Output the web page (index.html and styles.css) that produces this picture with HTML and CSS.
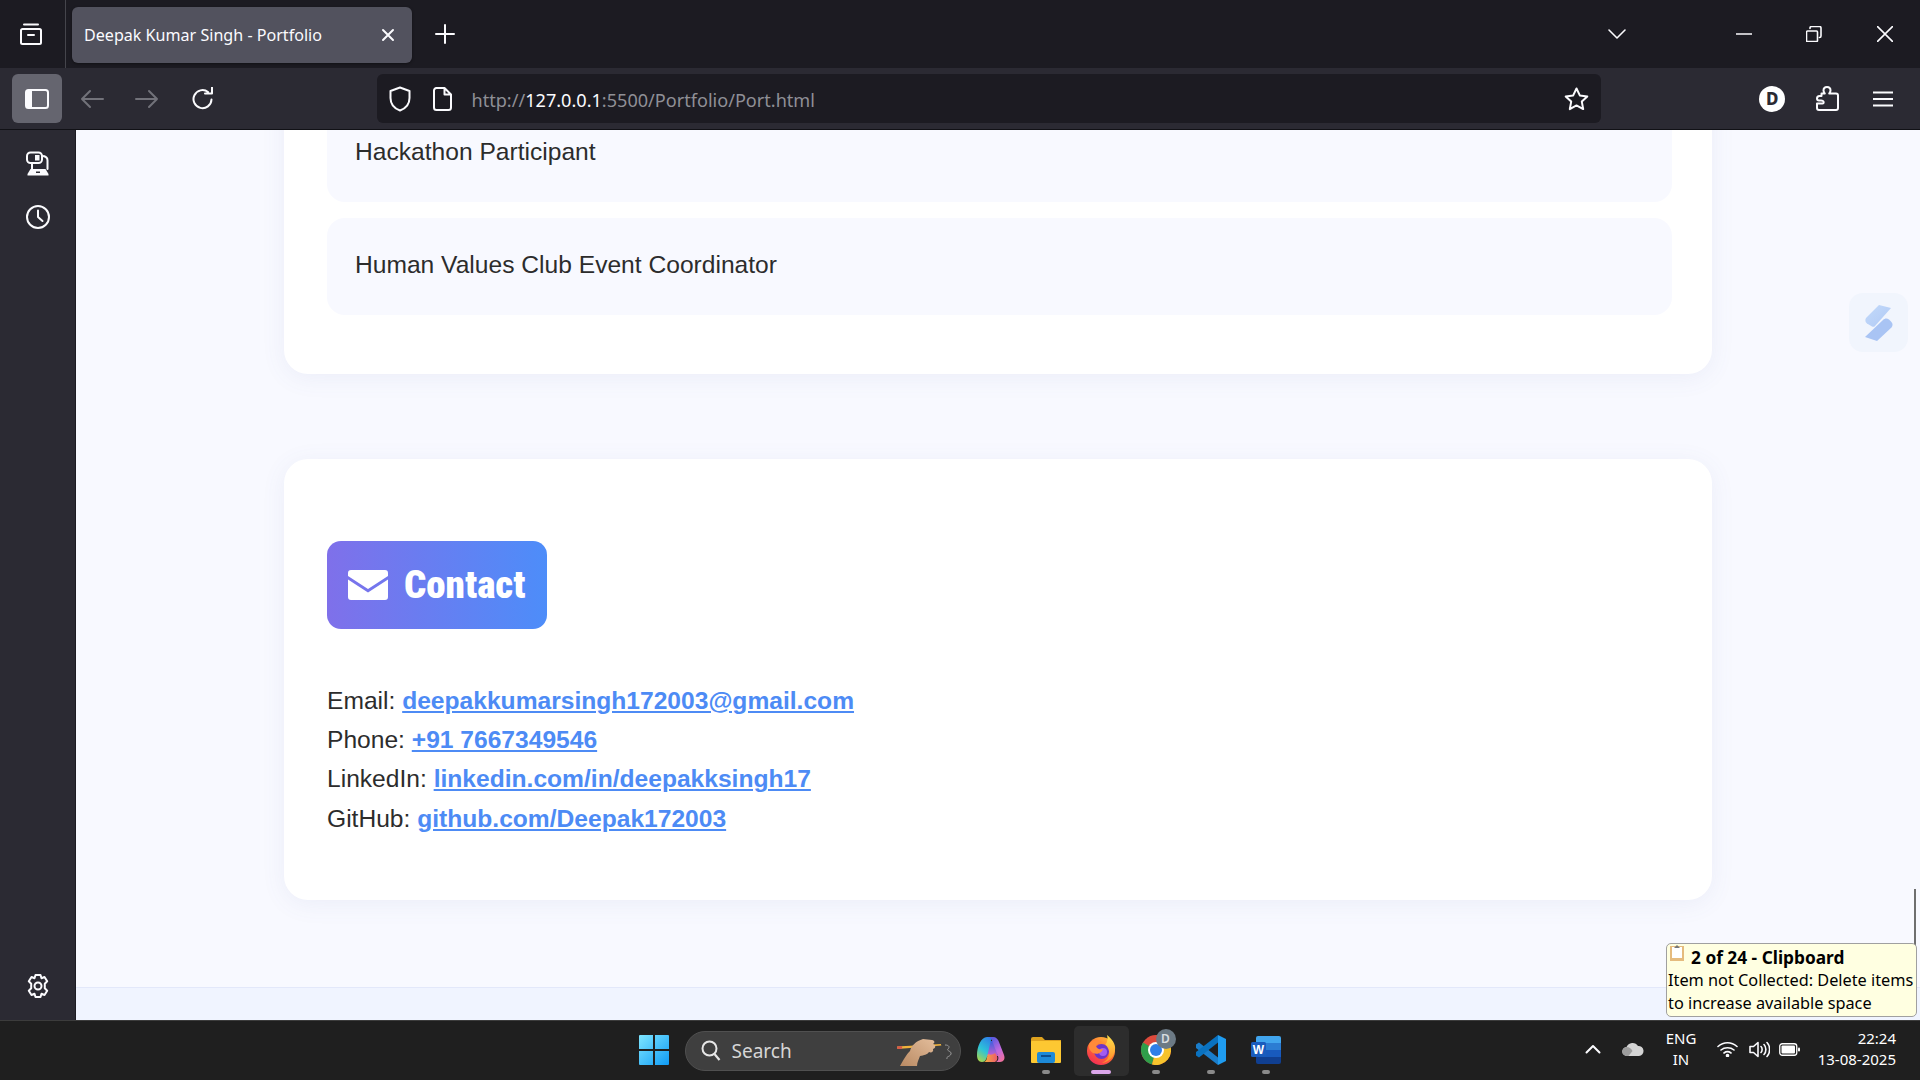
FILE: index.html
```html
<!DOCTYPE html>
<html lang="en">
<head>
    <meta charset="UTF-8">
    <meta name="viewport" content="width=device-width, initial-scale=1.0">
    <title>Deepak Kumar Singh - Portfolio</title>
    <link rel="stylesheet" href="styles.css">
</head>
<body>
<div class="screen">

    <!-- tab strip -->
    <div class="tabbar">
        <div class="tabs-btn">
            <svg class="ico" width="26" height="26" viewBox="0 0 26 26"><path d="M6 3.500h14M4.500 8h17a1.500 1.500 0 0 1 1.500 1.500v12a1.500 1.500 0 0 1-1.500 1.500h-17a1.500 1.500 0 0 1-1.500-1.500v-12a1.500 1.500 0 0 1 1.500-1.500zM10 14h6"/></svg>
        </div>
        <div class="tab">
            <span class="tab-title">Deepak Kumar Singh - Portfolio</span>
            <svg class="ico" width="14" height="14" viewBox="0 0 14 14"><path d="M2 2l10 10M12 2L2 12"/></svg>
        </div>
        <div class="new-tab">
            <svg class="ico" width="20" height="20" viewBox="0 0 20 20"><path d="M10 1v18M1 10h18"/></svg>
        </div>
        <div class="tab-list">
            <svg class="ico thin" width="20" height="12" viewBox="0 0 20 12"><path d="M2 2l8 8 8-8"/></svg>
        </div>
        <div class="win-btn">
            <svg class="ico thin" width="16" height="4" viewBox="0 0 16 4"><path d="M0 2h16"/></svg>
        </div>
        <div class="win-btn">
            <svg class="ico thin" width="16" height="16" viewBox="0 0 16 16"><path d="M1.500 5h9a1 1 0 0 1 1 1v8.500a1 1 0 0 1-1 1h-9a1 1 0 0 1-1-1V6a1 1 0 0 1 1-1zM4 2.500V2a1.500 1.500 0 0 1 1.500-1.500h8A1.500 1.500 0 0 1 15 2v8a1.500 1.500 0 0 1-1.500 1.500"/></svg>
        </div>
        <div class="win-btn">
            <svg class="ico thin" width="16" height="16" viewBox="0 0 16 16"><path d="M.5.5l15 15M15.500.5l-15 15"/></svg>
        </div>
    </div>

    <!-- nav toolbar -->
    <div class="toolbar">
        <div class="side-toggle">
            <svg width="24" height="20" viewBox="0 0 24 20"><rect x="1" y="1" width="22" height="18" rx="2.500" fill="none" stroke="#fbfbfe" stroke-width="2"/><rect x="1" y="1" width="6" height="18" fill="#fbfbfe"/></svg>
        </div>
        <div class="nav-btn dim">
            <svg class="ico" width="24" height="20" viewBox="0 0 24 20"><path d="M23 10H2M10 2l-8 8 8 8"/></svg>
        </div>
        <div class="nav-btn dim">
            <svg class="ico" width="24" height="20" viewBox="0 0 24 20"><path d="M1 10h21M14 2l8 8-8 8"/></svg>
        </div>
        <div class="nav-btn">
            <svg class="ico" width="24" height="24" viewBox="0 0 24 24"><path d="M20.500 12.500A9 9 0 1 1 17 5M14 6.500h7V0"/></svg>
        </div>
        <div class="urlbar">
            <svg class="ico shield" width="22" height="26" viewBox="0 0 22 26"><path d="M11 1.500l9.500 3.500v7c0 6-4 10.500-9.500 12.500C5.500 22.500 1.500 18 1.500 12V5z"/></svg>
            <svg class="ico page" width="19" height="24" viewBox="0 0 19 24"><path d="M3 1h8.500L18 7.500V20.500a2.500 2.500 0 0 1-2.500 2.500h-12A2.500 2.500 0 0 1 1 20.500v-17A2.500 2.500 0 0 1 3.500 1zM11.500 1v6.500H18"/></svg>
            <span class="url"><span class="url-dim">http://</span>127.0.0.1<span class="url-dim">:5500/Portfolio/Port.html</span></span>
            <svg class="ico star" width="25" height="24" viewBox="0 0 25 24"><path d="M12.500 1.500l3.300 6.900 7.500 1-5.500 5.200 1.400 7.500-6.700-3.700-6.700 3.700 1.400-7.500L1.700 9.400l7.500-1z"/></svg>
        </div>
        <div class="tool-icons">
            <div class="nav-btn"><span class="avatar">D</span></div>
            <div class="nav-btn">
                <svg class="ico" width="23" height="25" viewBox="0 0 23 25"><path d="M5.500 7.500h3.300c-.8-1-1.300-2-1.300-3C7.500 2.500 9 1 11 1s3.500 1.500 3.500 3.500c0 1-.5 2-1.300 3H20a2 2 0 0 1 2 2V22a2 2 0 0 1-2 2H3a2 2 0 0 1-2-2v-4.500h5.500c.8 0 1.200-.5 1.200-1.200 0-1-1-1.800-2.700-1.800H3a2 2 0 0 1-2-2c0-1.500 1.200-2.500 2.500-2.500h2V7.500z"/></svg>
            </div>
            <div class="nav-btn">
                <svg class="ico" width="20" height="16" viewBox="0 0 20 16"><path d="M0 1.500h20M0 8h20M0 14.500h20"/></svg>
            </div>
        </div>
    </div>

    <div class="middle">
        <!-- firefox sidebar -->
        <div class="sidebar">
            <svg class="ico side-ico" width="26" height="26" viewBox="0 0 26 26"><rect x="2" y="1.500" width="15" height="10.500" rx="3.500"/><rect x="10" y="4" width="4.500" height="5.500" fill="#fbfbfe" stroke="none"/><path d="M17 5c4 0 5.500 1.500 5.500 4.500V18M7 12v6"/><path d="M5.500 18h15l3 5v1.500h-21V23z" fill="#fbfbfe" stroke="none"/><rect x="11" y="20.500" width="4" height="1.500" fill="#2b2a33" stroke="none"/></svg>
            <svg class="ico side-ico" width="26" height="26" viewBox="0 0 26 26"><circle cx="13" cy="13" r="11"/><path d="M13 6.500V13l4.500 4"/></svg>
            <svg class="ico side-ico gear" width="26" height="26" viewBox="0 0 26 26"><path d="M10.500 2h5l1 3.200 3-1.200 2.700 4.300-2.400 2.400.0 4.600 2.400 2.400-2.700 4.300-3-1.200-1 3.200h-5l-1-3.200-3 1.200-2.700-4.300 2.400-2.400v-4.600L3.800 8.300 6.500 4l3 1.200z" stroke-linejoin="round"/><circle cx="13" cy="13" r="3.500"/></svg>
        </div>

        <!-- page, scrolled down to the end -->
        <div class="viewport">
            <div class="page-body">
                <section class="card card-extra">
                    <div class="item">Hackathon Participant</div>
                    <div class="item">Human Values Club Event Coordinator</div>
                </section>
                <section class="card">
                    <h2 class="badge">
                        <svg width="40" height="30" viewBox="0 0 40 30"><path d="M3 0h34a3 3 0 0 1 3 3v3L20 19 0 6V3a3 3 0 0 1 3-3zM0 9.500L20 22.500 40 9.500V27a3 3 0 0 1-3 3H3a3 3 0 0 1-3-3z" fill="#fff"/></svg>
                        <span>Contact</span>
                    </h2>
                    <p class="contact-line">Email: <a href="#">deepakkumarsingh172003@gmail.com</a></p>
                    <p class="contact-line">Phone: <a href="#">+91 7667349546</a></p>
                    <p class="contact-line">LinkedIn: <a href="#">linkedin.com/in/deepakksingh17</a></p>
                    <p class="contact-line">GitHub: <a href="#">github.com/Deepak172003</a></p>
                </section>
            </div>
            <div class="page-footer"></div>

            <div class="float-widget">
                <svg width="34" height="40" viewBox="0 0 34 40"><defs><linearGradient id="wgA" x1="0" y1="0" x2="1" y2="1"><stop offset="0" stop-color="#c3dafa"/><stop offset="1" stop-color="#b0c9f5"/></linearGradient></defs><path d="M17 2l12 3-16 18c-1 1-2 1-3 .5l-5-3c-2-1.500-2-4-1-5.500z" fill="url(#wgA)"/><path d="M21 17c2-2 4-2 6-.5l2 2c2 2 2 4 .5 6L15 38 3 34z" fill="#a9c4f4"/></svg>
            </div>
            <div class="scroll-thumb"></div>
        </div>
    </div>

    <!-- windows taskbar -->
    <div class="taskbar">
        <div></div>
        <div class="task-center">
            <div class="tile">
                <svg width="30" height="30" viewBox="0 0 30 30"><defs><linearGradient id="winG" x1="0" y1="0" x2="1" y2="1"><stop offset="0" stop-color="#7fe6ff"/><stop offset="1" stop-color="#0f9bf5"/></linearGradient></defs><path d="M0 1a1 1 0 0 1 1-1h13v14H0zM16 0h13a1 1 0 0 1 1 1v13H16zM0 16h14v14H1a1 1 0 0 1-1-1zM16 16h14v13a1 1 0 0 1-1 1H16z" fill="url(#winG)"/></svg>
            </div>
            <div class="search-pill">
                <svg class="search-ico" width="20" height="22" viewBox="0 0 20 22"><circle cx="8.500" cy="8.500" r="7" fill="none" stroke="#e6e6e6" stroke-width="2"/><path d="M13.500 14l5 6" stroke="#e6e6e6" stroke-width="2.200" fill="none"/></svg>
                <span>Search</span>
                <svg class="hand" width="60" height="32" viewBox="0 0 60 32"><defs><linearGradient id="skin" x1="0" y1="1" x2="1" y2="0"><stop offset="0" stop-color="#b98a63"/><stop offset="1" stop-color="#e3bd9b"/></linearGradient></defs><path d="M2 11.500l44-2.500.5 1.500L2.500 14z" fill="#f0b23c"/><path d="M2 11.500l5-.3.2 2.500-4.700.3z" fill="#d9574a"/><path d="M46 9l4 .8-3.500.8z" fill="#3a3a3a"/><path d="M5 31c4-7 6-11 10-15 1-5 6-10 13-12l9 1c3 .5 3 3 1 4 3 1 3 4 0 5 1 3-2 4-4 3-2 3-5 3-9 4-1 3-3 6-3 10z" fill="url(#skin)"/><path d="M50 10c4 0 5 2 3 4s4 2 3 5-5 2-4 5" fill="none" stroke="#9a9a9a" stroke-width="1"/></svg>
            </div>
            <div class="tile">
                <svg width="30" height="28" viewBox="0 0 30 28"><defs><linearGradient id="copA" x1="0.700" y1="0" x2="0.200" y2="1"><stop offset="0" stop-color="#2e7fe8"/><stop offset="0.550" stop-color="#2dc4d8"/><stop offset="1" stop-color="#a8d64a"/></linearGradient><linearGradient id="copB" x1="0.300" y1="0" x2="0.800" y2="1"><stop offset="0" stop-color="#5b5be0"/><stop offset="0.550" stop-color="#c06ae0"/><stop offset="1" stop-color="#f0709a"/></linearGradient><linearGradient id="copC" x1="0" y1="0" x2="1" y2="0"><stop offset="0" stop-color="#f2b13a"/><stop offset="1" stop-color="#ee5a6c"/></linearGradient><linearGradient id="copD" x1="0" y1="0" x2="0" y2="1"><stop offset="0" stop-color="#3a5fe0"/><stop offset="1" stop-color="#c85fd0"/></linearGradient></defs><path d="M13 5h6l3 15H9z" fill="url(#copD)"/><path d="M11 1h7c-2 1-3 3-3.500 5L11 21c-.8 3-2.500 5-5 5-3.500 0-5-3-5-7C1 11 5 1 11 1z" fill="url(#copA)"/><path d="M17 1c3 0 5 2 6 5l5 13c1.500 4-.5 7-4 7h-4c2-1 3-3 2-6L17 7c-1-3-2-5-4-6z" fill="url(#copB)"/><path d="M11 21l1-3c2 1 5 1 7-1l2 3c1 3 0 5-2 6H8c2-.5 3-3 3-5z" fill="url(#copC)"/></svg>
            </div>
            <div class="tile has-dot">
                <svg width="30" height="26" viewBox="0 0 30 26"><path d="M0 2a2 2 0 0 1 2-2h9l3 3h16v5H0z" fill="#dfa31f"/><rect y="4" width="30" height="22" rx="1" fill="#fdc832"/><rect x="6" y="15" width="18" height="11" rx="2" fill="#1d8ad8"/><rect x="10" y="18" width="10" height="2" fill="#0c4f8f"/></svg>
            </div>
            <div class="tile tile-active has-dot dot-pink">
                <svg width="30" height="30" viewBox="0 0 30 30"><defs><linearGradient id="ffA" x1="0.800" y1="0" x2="0.200" y2="1"><stop offset="0" stop-color="#ffb83a"/><stop offset="0.500" stop-color="#ff6a30"/><stop offset="1" stop-color="#f2285a"/></linearGradient><linearGradient id="ffB" x1="0.500" y1="0" x2="0.500" y2="1"><stop offset="0" stop-color="#ffe24a"/><stop offset="1" stop-color="#ff8a2a"/></linearGradient></defs><circle cx="15" cy="16" r="14" fill="url(#ffA)"/><circle cx="15.500" cy="16.500" r="7.500" fill="#6d35c8"/><circle cx="17" cy="17" r="4" fill="#a45cf0"/><path d="M3 9c3-4 9-5 13-2-3 0-5 2-6 4 1 3 4 4 7 3-1 4-6 6-10 4-3-2-5-5-4-9z" fill="#ff8a3a"/><path d="M21 0c5 4 9 9 8 15-1 7-6 12-13 13 5-2 8-7 7-12-.5-3-2-5-3.500-6.500C21.500 7 22 3 21 0z" fill="url(#ffB)"/></svg>
            </div>
            <div class="tile has-dot">
                <svg width="30" height="30" viewBox="0 0 30 30"><circle cx="15" cy="15" r="15" fill="#dd4a3c"/><path d="M15 15L2 7.500A15 15 0 0 0 11 29.500z" fill="#2f9e4a"/><path d="M15 15l13-7.500A15 15 0 0 1 11 29.500z" fill="#f6c32c"/><circle cx="15" cy="15" r="8" fill="#fff"/><circle cx="15" cy="15" r="6" fill="#2f7fe8"/></svg>
                <span class="count-badge">D</span>
            </div>
            <div class="tile has-dot">
                <svg width="30" height="30" viewBox="0 0 30 30"><path d="M0 9.500L3 7.500 22 22.500V30L0 13z" fill="#1a7dca"/><path d="M0 20.500L3 22.500 22 7.500V0L0 17z" fill="#0a72c0"/><path d="M22 0l8 4v22l-8 4z" fill="#1f9cf0"/></svg>
            </div>
            <div class="tile has-dot">
                <svg width="30" height="28" viewBox="0 0 30 28"><path d="M7 0h21a2 2 0 0 1 2 2v5H5V2a2 2 0 0 1 2-2z" fill="#41a5ee"/><rect x="5" y="7" width="25" height="7" fill="#2b7cd3"/><rect x="5" y="14" width="25" height="7" fill="#185abd"/><path d="M5 21h25v5a2 2 0 0 1-2 2H7a2 2 0 0 1-2-2z" fill="#103f91"/><rect y="6" width="15" height="15" rx="1.500" fill="#1a5cbd"/><text x="7.500" y="18" class="word-w">W</text></svg>
            </div>
        </div>
        <div class="tray">
            <div class="tray-item w40"><svg class="ico" width="16" height="10" viewBox="0 0 16 10"><path d="M1.500 8.500L8 2l6.500 6.500"/></svg></div>
            <div class="tray-item w40"><svg width="22" height="14" viewBox="0 0 22 14"><path d="M5 14a4.500 4.500 0 0 1-.5-9A6.500 6.500 0 0 1 16 4a5 5 0 0 1 1 10z" fill="#d4d4d4"/><path d="M5 14a4.500 4.500 0 0 1-.5-9c3 0 5 2 6 4l-4 5z" fill="#9d9d9d"/></svg></div>
            <div class="tray-lang">ENG<br>IN</div>
            <div class="tray-item w34"><svg class="ico thin" width="21" height="16" viewBox="0 0 21 16"><path d="M1 5.500c5.500-5 13.500-5 19 0M4 9c3.500-3 9.500-3 13 0M7 12c2-1.500 5-1.500 7 0"/><circle cx="10.500" cy="14.500" r="1" fill="#fff"/></svg></div>
            <div class="tray-item w28"><svg class="ico thin" width="21" height="17" viewBox="0 0 21 17"><path d="M1 5.500h3.500L9 1.500v14l-4.500-4H1zM12 5.500c1.500 1.500 1.500 4.500 0 6M15 3.500c2.500 2.500 2.500 7.500 0 10M18 1.500c3.500 3.500 3.500 10.500 0 14"/></svg></div>
            <div class="tray-item w32"><svg width="21" height="13" viewBox="0 0 21 13"><rect x=".75" y=".75" width="17" height="11.500" rx="2.500" fill="none" stroke="#fff" stroke-width="1.300"/><rect x="2.500" y="2.500" width="13.500" height="8" rx="1" fill="#fff"/><rect x="19" y="4.500" width="2" height="4" rx="1" fill="#fff"/></svg></div>
            <div class="tray-clock">22:24<br>13-08-2025</div>
        </div>
    </div>

    <div class="clip-tip">
        <div class="clip-head">
            <svg width="14" height="16" viewBox="0 0 14 16"><path d="M0 1h14v15H0z" fill="#e5bb7d"/><path d="M2 2h10v11H2z" fill="#fff"/><path d="M4 3l3-3 3 3z" fill="#777"/></svg>
            <b>2 of 24 - Clipboard</b>
        </div>
        <div>Item not Collected: Delete items</div>
        <div>to increase available space</div>
    </div>
</div>
</body>
</html>
```

FILE: styles.css
```css
* {
    box-sizing: border-box;
}

html,
body {
    margin: 0;
    height: 100%;
    overflow: hidden;
}

.screen {
    position: relative;
    width: 1920px;
    height: 1080px;
    display: flex;
    flex-direction: column;
    font-family: "Noto Sans", "Open Sans", sans-serif;
    background: #1c1b22;
}

.ico {
    fill: none;
    stroke: #fbfbfe;
    stroke-width: 2;
    stroke-linecap: round;
    stroke-linejoin: round;
    flex: none;
}

.ico.thin {
    stroke-width: 1.6;
}

/* tab strip */
.tabbar {
    height: 68px;
    display: flex;
    align-items: center;
    background: #1c1b22;
    color: #fbfbfe;
}

.tabs-btn {
    width: 66px;
    height: 68px;
    display: flex;
    align-items: center;
    justify-content: center;
    padding-right: 4px;
    border-right: 1px solid #45454c;
}

.tab {
    width: 340px;
    height: 56px;
    margin-left: 6px;
    margin-top: 1px;
    padding: 0 17px 0 12px;
    display: flex;
    align-items: center;
    justify-content: space-between;
    background: #52525e;
    border-radius: 6px;
    box-shadow: 0 1px 3px rgba(0, 0, 0, 0.4);
}

.tab-title {
    font-size: 16.100px;
    white-space: nowrap;
}

.new-tab {
    width: 56px;
    margin-left: 5px;
    display: flex;
    justify-content: center;
}

.tab-list {
    width: 40px;
    margin-left: auto;
    margin-right: 72px;
    display: flex;
    justify-content: center;
}

.win-btn {
    width: 70.500px;
    display: flex;
    justify-content: center;
}

/* nav toolbar */
.toolbar {
    height: 62px;
    padding-left: 12px;
    display: flex;
    align-items: center;
    background: #2b2a33;
    border-bottom: 1px solid #111116;
}

.side-toggle {
    width: 50px;
    height: 49px;
    display: flex;
    align-items: center;
    justify-content: center;
    background: #65656f;
    border-radius: 6px;
}

.nav-btn {
    width: 55.500px;
    height: 49px;
    display: flex;
    align-items: center;
    justify-content: center;
}

.nav-btn.dim .ico {
    stroke: #72727a;
}

.side-toggle + .nav-btn {
    margin-left: 2px;
}

.urlbar {
    width: 1224px;
    height: 49px;
    margin-left: 146px;
    padding: 0 12px 0 12px;
    display: flex;
    align-items: center;
    background: #1c1b22;
    border-radius: 6px;
}

.shield {
    margin-right: 22px;
}

.page {
    margin-right: 20px;
}

.url {
    padding-top: 2px;
    font-size: 18.100px;
    color: #fbfbfe;
    white-space: nowrap;
}

.url-dim {
    color: #8f8f96;
}

.star {
    margin-left: auto;
    margin-right: 0;
}

.tool-icons {
    margin-left: 144px;
    display: flex;
}

.avatar {
    width: 26px;
    height: 26px;
    display: flex;
    align-items: center;
    justify-content: center;
    border-radius: 50%;
    background: #fff;
    color: #2b2a33;
    font-size: 17px;
    font-weight: 800;
}

/* firefox sidebar + page */
.middle {
    flex: 1;
    display: flex;
    min-height: 0;
}

.sidebar {
    width: 76px;
    flex: none;
    padding-top: 21px;
    display: flex;
    flex-direction: column;
    align-items: center;
    gap: 27px;
    background: #2b2a33;
    border-right: 1px solid #1c1b22;
}

.side-ico {
    stroke-width: 2;
}

.gear {
    margin-top: auto;
    margin-bottom: 21px;
}

.viewport {
    position: relative;
    flex: 1;
    overflow: hidden;
    display: flex;
    flex-direction: column;
    justify-content: flex-end;
    background: #f8f9ff;
    font-family: "Liberation Sans", Arial, sans-serif;
    color: #2c2c2c;
}

.page-body {
    width: 1428px;
    margin: 0 auto;
    padding-bottom: 87px;
    display: flex;
    flex-direction: column;
    gap: 85px;
    flex: none;
}

.card {
    padding: 43px;
    background: #fff;
    border-radius: 24px;
    box-shadow: 0 4px 24px rgba(90, 100, 160, 0.08);
}

.card-extra {
    padding-right: 40px;
    padding-bottom: 59px;
    display: flex;
    flex-direction: column;
    gap: 16px;
}

.item {
    height: 97px;
    padding: 0 28px 2px;
    display: flex;
    align-items: center;
    font-size: 24.600px;
    background: #f8f9ff;
    border-radius: 18px;
}

.badge {
    width: 220px;
    height: 88px;
    margin: 39px 0 52px;
    padding-left: 21px;
    display: flex;
    align-items: center;
    gap: 16px;
    border-radius: 14px;
    background: linear-gradient(90deg, #7f70ea, #4d8df9);
    color: #fff;
    font-family: Roboto, "Liberation Sans", sans-serif;
    font-size: 39px;
    font-weight: 900;
    font-stretch: 75%;
}

.contact-line {
    margin: 0;
    font-size: 24.600px;
    line-height: 39.300px;
}

.contact-line:last-child {
    margin-bottom: 19px;
}

.contact-line a {
    color: #4d8bf5;
    font-weight: 700;
}

.page-footer {
    height: 33px;
    flex: none;
    background: #f0f4ff;
    border-top: 1px solid #e3e8fa;
}

.float-widget {
    position: absolute;
    top: 163px;
    right: 12px;
    width: 59px;
    height: 59px;
    display: flex;
    align-items: center;
    justify-content: center;
    background: #f1f5fd;
    border-radius: 14px;
}

.scroll-thumb {
    position: absolute;
    top: 759px;
    right: 4px;
    width: 2px;
    height: 70px;
    background: #6f6f6f;
}

/* windows taskbar */
.taskbar {
    height: 60px;
    display: grid;
    grid-template-columns: 1fr auto 1fr;
    align-items: center;
    background: #1f1f1f;
    border-top: 1px solid #3c3c3c;
    color: #fff;
}

.task-center {
    display: flex;
    align-items: center;
}

.tile {
    position: relative;
    width: 55px;
    height: 50px;
    display: flex;
    align-items: center;
    justify-content: center;
    border-radius: 5px;
}

.tile svg {
    margin-bottom: 2px;
}

.tile-active {
    background: #2d2d2d;
}

.has-dot::after {
    content: "";
    position: absolute;
    left: 50%;
    bottom: 2px;
    width: 8px;
    height: 4px;
    margin-left: -4px;
    border-radius: 2px;
    background: #8a8a8a;
}

.dot-pink::after {
    width: 20px;
    margin-left: -10px;
    background: #dba6ea;
}

.count-badge {
    position: absolute;
    top: 3px;
    right: 8px;
    width: 20px;
    height: 20px;
    display: flex;
    align-items: center;
    justify-content: center;
    border-radius: 50%;
    background: #6c7a85;
    color: #d8dde0;
    font-size: 12px;
    font-weight: 600;
}

.search-pill {
    width: 276px;
    height: 40px;
    margin: 0 3px;
    padding-left: 15px;
    display: flex;
    align-items: center;
    gap: 11px;
    border-radius: 20px;
    background: #3f3f3f;
    border: 1px solid #505050;
    color: #d6d6d6;
    font-size: 19px;
}

.hand {
    margin-left: auto;
    margin-right: 5px;
}

.word-w {
    fill: #fff;
    font-family: "Liberation Sans", sans-serif;
    font-size: 12px;
    font-weight: 700;
    text-anchor: middle;
}

.tray {
    display: flex;
    align-items: center;
    justify-content: flex-end;
    padding-right: 24px;
    padding-bottom: 3px;
    font-size: 15px;
}

.tray-item {
    display: flex;
    justify-content: center;
}

.w40 { width: 40px; }
.w34 { width: 36px; }
.w28 { width: 28px; }
.w32 { width: 32px; }

.tray-lang {
    width: 56px;
    text-align: center;
    line-height: 21px;
}

.tray-clock {
    width: 91px;
    text-align: right;
    line-height: 21px;
}

/* clipboard tooltip sits over the page and the scrollbar */
.clip-tip {
    position: absolute;
    left: 1666px;
    top: 943px;
    width: 251px;
    height: 74px;
    padding: 2px 0 0 1px;
    background: #ffffe1;
    border: 1px solid #a0a0a0;
    border-radius: 5px;
    color: #000;
    font-size: 16.300px;
    line-height: 23.200px;
    white-space: nowrap;
}

.clip-head {
    display: flex;
    align-items: flex-start;
    gap: 7px;
    font-size: 17.300px;
}

.clip-head svg {
    margin-left: 2px;
    margin-top: -1px;
}
```
